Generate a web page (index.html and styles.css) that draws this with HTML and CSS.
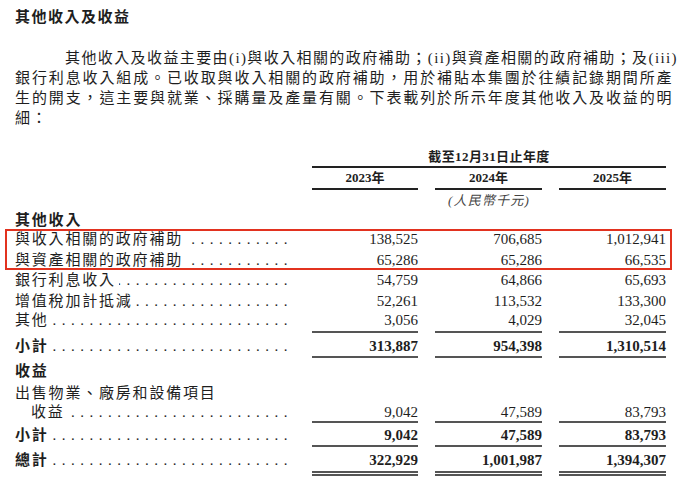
FILE: index.html
```html
<!DOCTYPE html>
<html lang="zh-Hant">
<head>
<meta charset="utf-8">
<title>其他收入及收益</title>
<link rel="stylesheet" href="styles.css">
</head>
<body>
<div class="page">
  <h2 class="title">其他收入及收益</h2>
  <div class="para">
    <span class="ln first">其他收入及收益主要由(i)與收入相關的政府補助；(ii)與資產相關的政府補助；及(iii)</span>
    <span class="ln">銀行利息收入組成。已收取與收入相關的政府補助，用於補貼本集團於往績記錄期間所產</span>
    <span class="ln">生的開支，這主要與就業、採購量及產量有關。下表載列於所示年度其他收入及收益的明</span>
    <span class="ln last">細：</span>
  </div>

  <div class="table">
    <div class="row hd1"><div class="lbl"></div><div class="span">截至12月31日止年度</div></div>
    <div class="row hd2"><div class="lbl"></div><div class="yr">2023年</div><div class="yr">2024年</div><div class="yr">2025年</div></div>
    <div class="row hd3"><div class="lbl"></div><div class="span unit">(人民幣千元)</div></div>

    <div class="row sec1"><div class="lbl b">其他收入</div></div>
    <div class="hl">
      <div class="row r"><div class="lbl"><span class="t">與收入相關的政府補助</span><span class="dots"></span></div><div class="num">138,525</div><div class="num">706,685</div><div class="num">1,012,941</div></div>
      <div class="row r"><div class="lbl"><span class="t">與資產相關的政府補助</span><span class="dots"></span></div><div class="num">65,286</div><div class="num">65,286</div><div class="num">66,535</div></div>
    </div>
    <div class="row r"><div class="lbl"><span class="t">銀行利息收入</span><span class="dots"></span></div><div class="num">54,759</div><div class="num">64,866</div><div class="num">65,693</div></div>
    <div class="row r"><div class="lbl"><span class="t">增值稅加計抵減</span><span class="dots"></span></div><div class="num">52,261</div><div class="num">113,532</div><div class="num">133,300</div></div>
    <div class="row r rlast ul"><div class="lbl"><span class="t">其他</span><span class="dots"></span></div><div class="num">3,056</div><div class="num">4,029</div><div class="num">32,045</div></div>
    <div class="row sub1 ul"><div class="lbl"><span class="t b">小計</span><span class="dots"></span></div><div class="num b">313,887</div><div class="num b">954,398</div><div class="num b">1,310,514</div></div>

    <div class="row sec2"><div class="lbl b">收益</div></div>
    <div class="row sale"><div class="lbl"><span class="t">出售物業、廠房和設備項目</span></div></div>
    <div class="row gain ul"><div class="lbl"><span class="t ind">收益</span><span class="dots"></span></div><div class="num">9,042</div><div class="num">47,589</div><div class="num">83,793</div></div>
    <div class="row sub2 ul"><div class="lbl"><span class="t b">小計</span><span class="dots"></span></div><div class="num b">9,042</div><div class="num b">47,589</div><div class="num b">83,793</div></div>
    <div class="row total dbl"><div class="lbl"><span class="t b">總計</span><span class="dots"></span></div><div class="num b">322,929</div><div class="num b">1,001,987</div><div class="num b">1,394,307</div></div>
  </div>
</div>
</body>
</html>
```

FILE: styles.css
```css
html, body {
  margin: 0;
  padding: 0;
  background: #ffffff;
}

body {
  font-family: "Liberation Serif", "Noto Sans CJK TC", serif;
  color: #1e1e1e;
  font-size: 15px;
}

.page {
  padding: 7px 27px 0 15px;
}

.title {
  margin: 0;
  font-size: 15px;
  line-height: 20px;
  font-weight: 700;
  letter-spacing: 1.5px;
}

.para {
  margin-top: 21px;
  font-size: 15px;
  line-height: 20px;
  letter-spacing: 1.4px;
}

.ln {
  display: block;
  text-align: justify;
  text-align-last: justify;
  white-space: nowrap;
}

.ln.first {
  padding-left: 50px;
}

.ln.last {
  text-align-last: left;
}

.table {
  margin-top: 19px;
  width: 651px;
}

.row {
  display: grid;
  grid-template-columns: 280px 106px 107px 107px;
  column-gap: 17px;
}

.lbl {
  display: flex;
  align-items: baseline;
  padding-right: 2px;
  letter-spacing: 1.8px;
  white-space: nowrap;
  min-width: 0;
}

.t {
  flex: none;
}

.ind {
  padding-left: 16px;
}

.dots {
  flex: 1;
  min-width: 0;
  overflow: hidden;
  direction: rtl;
  margin-left: 3px;
  font-weight: 400;
  letter-spacing: 5.5px;
}

.dots::after {
  content: "..............................................................";
}

.b {
  font-weight: 700;
}

.num {
  text-align: right;
}

.span {
  grid-column: 2 / 5;
  text-align: center;
}

/* header rows */
.hd1 {
  line-height: 19px;
  font-size: 13px;
  font-weight: 700;
  letter-spacing: 0.4px;
}

.hd1 .span {
  border-bottom: 2px solid #222;
}

.hd2 {
  line-height: 20px;
  font-size: 13px;
  font-weight: 700;
}

.yr {
  text-align: center;
  border-bottom: 2px solid #222;
}

.hd3 {
  line-height: 21px;
  font-size: 13px;
}

.unit {
  font-style: italic;
  color: #444;
  letter-spacing: 1.2px;
}

/* body rows */
.sec1 {
  line-height: 18px;
}

.r {
  line-height: 20.6px;
}

.rlast {
  line-height: 19.6px;
}

.ul .num {
  border-bottom: 2px solid #555;
}

.sub1 {
  padding-top: 3px;
  line-height: 20px;
}

.sec2 {
  padding-top: 3px;
  line-height: 20px;
}

.sale {
  padding-top: 2px;
  line-height: 20px;
}

.gain {
  line-height: 18px;
}

.sub2 {
  padding-top: 2px;
  line-height: 20px;
}

.total {
  padding-top: 3px;
  line-height: 21px;
}

.dbl .num {
  border-bottom: 5px double #555;
}

/* highlight annotation over the two grant rows */
.hl {
  position: relative;
}

.hl::after {
  content: "";
  position: absolute;
  top: 0;
  bottom: 0;
  left: -10px;
  right: -6px;
  border: 2px solid #e2321f;
  pointer-events: none;
}
```
